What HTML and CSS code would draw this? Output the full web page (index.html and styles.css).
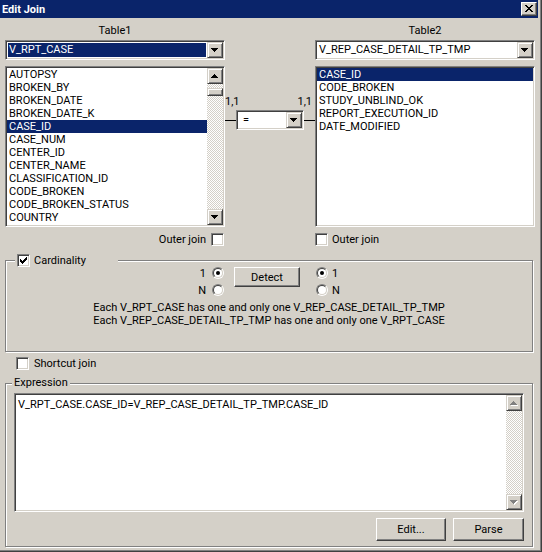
FILE: index.html
```html
<!DOCTYPE html>
<html>
<head>
<meta charset="utf-8">
<title>Edit Join</title>
<link rel="stylesheet" href="styles.css">
</head>
<body>
<div class="window">
  <div class="titlebar">
    <span class="title">Edit Join</span>
    <span class="close-btn"><svg width="8" height="7" viewBox="0 0 8 7"><path d="M0 0h2v1h-2zM6 0h2v1h-2zM1 1h2v1h-2zM5 1h2v1h-2zM2 2h4v1h-4zM3 3h2v1h-2zM2 4h4v1h-4zM1 5h2v1h-2zM5 5h2v1h-2zM0 6h2v1h-2zM6 6h2v1h-2z" fill="#000"/></svg></span>
  </div>
  <div class="content">
    <div class="tables">
      <div class="tbl-label">Table1</div>
      <div></div>
      <div class="tbl-label">Table2</div>

      <div class="combo">
        <div class="combo-field"><span class="combo-text selected">V_RPT_CASE</span></div>
        <span class="scroll-btn"><svg width="7" height="4" viewBox="0 0 7 4"><path d="M0 0h7v1h-7zM1 1h5v1h-5zM2 2h3v1h-3zM3 3h1v1h-1z" fill="#000"/></svg></span>
      </div>
      <div></div>
      <div class="combo">
        <div class="combo-field"><span class="combo-text">V_REP_CASE_DETAIL_TP_TMP</span></div>
        <span class="scroll-btn"><svg width="7" height="4" viewBox="0 0 7 4"><path d="M0 0h7v1h-7zM1 1h5v1h-5zM2 2h3v1h-3zM3 3h1v1h-1z" fill="#000"/></svg></span>
      </div>

      <div class="listbox">
        <div class="list-items">
          <div class="item">AUTOPSY</div>
          <div class="item">BROKEN_BY</div>
          <div class="item">BROKEN_DATE</div>
          <div class="item">BROKEN_DATE_K</div>
          <div class="item selected">CASE_ID</div>
          <div class="item">CASE_NUM</div>
          <div class="item">CENTER_ID</div>
          <div class="item">CENTER_NAME</div>
          <div class="item">CLASSIFICATION_ID</div>
          <div class="item">CODE_BROKEN</div>
          <div class="item">CODE_BROKEN_STATUS</div>
          <div class="item">COUNTRY</div>
        </div>
        <div class="vscroll">
          <span class="scroll-btn"><svg width="7" height="4" viewBox="0 0 7 4"><path d="M3 0h1v1h-1zM2 1h3v1h-3zM1 2h5v1h-5zM0 3h7v1h-7z" fill="#000"/></svg></span>
          <div class="track"><div class="thumb"></div></div>
          <span class="scroll-btn"><svg width="7" height="4" viewBox="0 0 7 4"><path d="M0 0h7v1h-7zM1 1h5v1h-5zM2 2h3v1h-3zM3 3h1v1h-1z" fill="#000"/></svg></span>
        </div>
      </div>
      <div class="join-op">
        <div class="card-labels"><span>1,1</span><span>1,1</span></div>
        <div class="op-row">
          <span class="link-line"></span>
          <div class="combo combo-op">
            <div class="combo-field"><span class="combo-text op-text">=</span></div>
            <span class="scroll-btn"><svg width="7" height="4" viewBox="0 0 7 4"><path d="M0 0h7v1h-7zM1 1h5v1h-5zM2 2h3v1h-3zM3 3h1v1h-1z" fill="#000"/></svg></span>
          </div>
          <span class="link-line"></span>
        </div>
      </div>
      <div class="listbox">
        <div class="list-items">
          <div class="item selected">CASE_ID</div>
          <div class="item">CODE_BROKEN</div>
          <div class="item">STUDY_UNBLIND_OK</div>
          <div class="item">REPORT_EXECUTION_ID</div>
          <div class="item">DATE_MODIFIED</div>
        </div>
      </div>

      <div class="outer-join outer-left"><span>Outer join</span><span class="checkbox"></span></div>
      <div></div>
      <div class="outer-join outer-right"><span class="checkbox"></span><span>Outer join</span></div>
    </div>

    <div class="groupbox cardinality">
      <div class="legend legend-card">
        <span class="checkbox"><svg width="7" height="7" viewBox="0 0 7 7"><path d="M6 0h1v1h-1zM5 1h2v1h-2zM0 2h1v1h-1zM4 2h3v1h-3zM0 3h2v1h-2zM3 3h3v1h-3zM0 4h5v1h-5zM1 5h3v1h-3zM2 6h1v1h-1z" fill="#000"/></svg></span>
        <span>Cardinality</span>
      </div>
      <div class="card-controls">
        <div class="radio-col radio-col-left">
          <div class="radio-row"><span>1</span><span class="radio on"></span></div>
          <div class="radio-row"><span>N</span><span class="radio"></span></div>
        </div>
        <button class="btn btn-detect">Detect</button>
        <div class="radio-col radio-col-right">
          <div class="radio-row"><span class="radio on"></span><span>1</span></div>
          <div class="radio-row"><span class="radio"></span><span>N</span></div>
        </div>
      </div>
      <div class="card-text">
        <div>Each V_RPT_CASE has one and only one V_REP_CASE_DETAIL_TP_TMP</div>
        <div>Each V_REP_CASE_DETAIL_TP_TMP has one and only one V_RPT_CASE</div>
      </div>
    </div>

    <div class="shortcut"><span class="checkbox"></span><span>Shortcut join</span></div>

    <div class="groupbox expression">
      <div class="legend legend-expr">Expression</div>
      <div class="textarea">
        <div class="textarea-text">V_RPT_CASE.CASE_ID=V_REP_CASE_DETAIL_TP_TMP.CASE_ID</div>
        <div class="vscroll">
          <span class="scroll-btn"><svg width="8" height="5" viewBox="0 0 8 5"><path d="M4 1h1v1h-1zM3 2h3v1h-3zM2 3h5v1h-5zM1 4h7v1h-7z" fill="#fff"/><path d="M3 0h1v1h-1zM2 1h3v1h-3zM1 2h5v1h-5zM0 3h7v1h-7z" fill="#808080"/></svg></span>
          <div class="track"></div>
          <span class="scroll-btn"><svg width="8" height="5" viewBox="0 0 8 5"><path d="M1 1h7v1h-7zM2 2h5v1h-5zM3 3h3v1h-3zM4 4h1v1h-1z" fill="#fff"/><path d="M0 0h7v1h-7zM1 1h5v1h-5zM2 2h3v1h-3zM3 3h1v1h-1z" fill="#808080"/></svg></span>
        </div>
      </div>
      <div class="btn-row">
        <button class="btn btn-edit">Edit...</button>
        <button class="btn btn-parse">Parse</button>
      </div>
    </div>
  </div>
</div>
</body>
</html>
```

FILE: styles.css
```css
* { box-sizing: border-box; }
html, body { margin: 0; padding: 0; }
body {
  width: 542px;
  height: 552px;
  overflow: hidden;
  background: #d4d0c8;
  font-family: Roboto, "Liberation Sans", Arial, sans-serif;
  font-size: 11px;
  line-height: 13px;
  color: #000;
}
.window {
  width: 542px;
  height: 552px;
  background: #d4d0c8;
  box-shadow: inset -1px -1px 0 #404040, inset -2px -2px 0 #808080;
}
.titlebar {
  width: 538px;
  height: 18px;
  background: #0a246a;
  display: flex;
  align-items: center;
  justify-content: space-between;
  padding-left: 2px;
}
.title { color: #fff; font-weight: 700; font-size: 11px; line-height: 13px; }
.close-btn {
  width: 16px;
  height: 14px;
  margin-right: 1px;
  background: #d4d0c8;
  border: 1px solid;
  border-color: #fff #404040 #404040 #fff;
  box-shadow: inset -1px -1px 0 #808080;
  padding: 2px 0 0 3px;
}
.close-btn svg { display: block; }

.content { padding-left: 5px; }
.tables { display: grid; grid-template-columns: 220px 90px 220px; }
.tbl-label { height: 22px; padding-top: 6px; text-align: center; }

.combo {
  height: 20px;
  display: flex;
  background: #fff;
  border: 1px solid;
  border-color: #808080 #fff #fff #808080;
  box-shadow: inset 1px 1px 0 #404040, inset -1px -1px 0 #d4d0c8;
  padding: 1px;
}
.combo-field { flex: 1; min-width: 0; padding: 1px; }
.combo-text { display: block; height: 14px; line-height: 14px; padding-left: 1px; white-space: nowrap; }
.op-text { padding-left: 4px; }
.selected { background: #0a246a; color: #fff; }

.scroll-btn {
  display: block;
  width: 16px;
  height: 16px;
  flex: none;
  background: #d4d0c8;
  border: 1px solid;
  border-color: #d4d0c8 #404040 #404040 #d4d0c8;
  box-shadow: inset 1px 1px 0 #fff, inset -1px -1px 0 #808080;
}
.scroll-btn svg { display: block; margin: 5px 0 0 3px; }

.listbox {
  height: 161px;
  margin-top: 6px;
  display: flex;
  background: #fff;
  border: 1px solid;
  border-color: #808080 #fff #fff #808080;
  box-shadow: inset 1px 1px 0 #404040, inset -1px -1px 0 #d4d0c8;
  padding: 1px;
}
.list-items { flex: 1; min-width: 0; }
.item { height: 13px; line-height: 13px; padding-left: 2px; white-space: nowrap; }
.vscroll { width: 16px; flex: none; display: flex; flex-direction: column; }
.track {
  flex: 1;
  background: repeating-conic-gradient(#d4d0c8 0 25%, #fff 0 50%) 0 0 / 2px 2px;
}
.thumb {
  width: 16px;
  height: 8px;
  margin-top: 4px;
  background: #d4d0c8;
  border: 1px solid;
  border-color: #d4d0c8 #404040 #404040 #d4d0c8;
  box-shadow: inset 1px 1px 0 #fff, inset -1px -1px 0 #808080;
}

.join-op { margin-top: 6px; padding-top: 29px; }
.card-labels { display: flex; justify-content: space-between; padding-right: 3px; height: 13px; }
.op-row { display: flex; margin-top: 2px; height: 20px; }
.link-line { flex: 1; height: 1px; margin-top: 10px; background: #000; }
.combo-op { width: 68px; flex: none; }

.outer-join { display: flex; align-items: center; margin-top: 6px; height: 13px; }
.outer-left { justify-content: flex-end; gap: 5px; padding-right: 1px; }
.outer-right { gap: 4px; }

.checkbox {
  display: block;
  width: 13px;
  height: 13px;
  flex: none;
  background: #fff;
  border: 1px solid;
  border-color: #808080 #fff #fff #808080;
  box-shadow: inset 1px 1px 0 #404040, inset -1px -1px 0 #d4d0c8;
  padding: 2px;
}
.checkbox svg { display: block; }

.groupbox {
  position: relative;
  width: 528px;
  border: 1px solid #808080;
  box-shadow: 1px 1px 0 #fff, inset 1px 1px 0 #fff;
}
.legend {
  position: absolute;
  display: flex;
  align-items: center;
  height: 13px;
  background: #d4d0c8;
}
.cardinality { height: 92px; margin-top: 14px; padding-top: 6px; }
.legend-card { left: 9px; top: -7px; width: 103px; padding-left: 2px; gap: 4px; }
.legend-expr { left: 6px; top: -8px; padding: 0 2px; }

.card-controls { display: flex; justify-content: center; align-items: flex-start; }
.radio-col { display: flex; flex-direction: column; gap: 4px; }
.radio-col-left { width: 26px; margin-right: 10px; }
.radio-col-right { width: 24px; margin-left: 16px; }
.radio-row { height: 13px; display: flex; align-items: flex-start; }
.radio-col-left .radio-row { justify-content: flex-end; gap: 6px; }
.radio-col-right .radio-row { gap: 4px; }

.radio {
  position: relative;
  display: block;
  width: 12px;
  height: 12px;
  flex: none;
  border-radius: 50%;
  border: 1px solid;
  border-color: #808080 #fff #fff #808080;
}
.radio::before {
  content: "";
  position: absolute;
  left: 0; top: 0; right: 0; bottom: 0;
  border-radius: 50%;
  border: 1px solid;
  border-color: #404040 #d4d0c8 #d4d0c8 #404040;
  background: #fff;
}
.radio.on::after {
  content: "";
  position: absolute;
  left: 3px; top: 3px;
  width: 4px; height: 4px;
  border-radius: 50%;
  background: #000;
}

.btn {
  height: 23px;
  padding: 0;
  font-family: inherit;
  font-size: 11px;
  line-height: 13px;
  color: #000;
  background: #d4d0c8;
  border: 1px solid;
  border-color: #fff #404040 #404040 #fff;
  box-shadow: inset -1px -1px 0 #808080;
  border-radius: 0;
}
.btn-detect { width: 66px; height: 20px; }
.card-text { margin-top: 4px; text-align: center; }

.shortcut { display: flex; align-items: center; gap: 5px; margin: 5px 0 0 11px; height: 13px; }

.expression { height: 164px; margin-top: 13px; padding: 9px 8px 0 8px; }
.textarea {
  height: 119px;
  display: flex;
  background: #fff;
  border: 1px solid;
  border-color: #808080 #fff #fff #808080;
  box-shadow: inset 1px 1px 0 #404040, inset -1px -1px 0 #d4d0c8;
  padding: 1px;
}
.textarea-text { flex: 1; min-width: 0; padding: 3px 0 0 2px; white-space: nowrap; }
.btn-row { display: flex; justify-content: flex-end; gap: 7px; margin-top: 6px; }
.btn-edit { width: 70px; }
.btn-parse { width: 71px; }
```
